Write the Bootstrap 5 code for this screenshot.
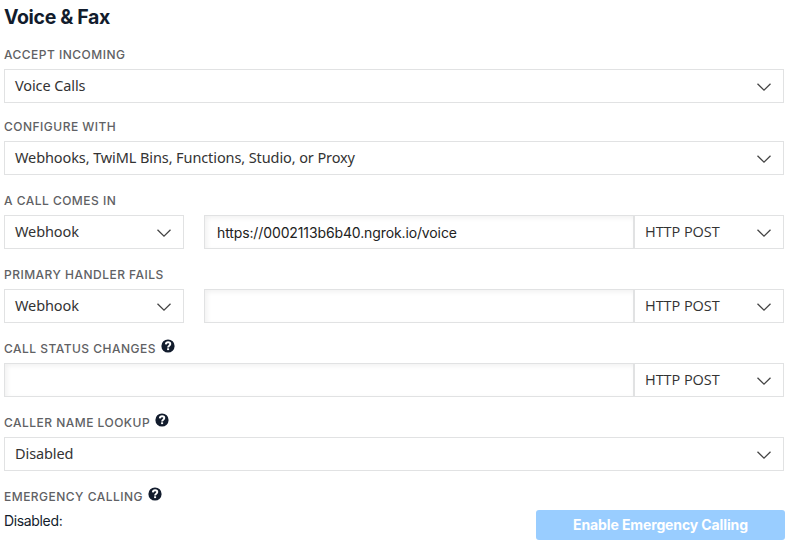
<!DOCTYPE html>
<html lang="en">
<head>
<meta charset="utf-8">
<meta name="viewport" content="width=device-width, initial-scale=1">
<title>Voice &amp; Fax</title>
<link href="https://cdn.jsdelivr.net/npm/bootstrap@5.3.0/dist/css/bootstrap.min.css" rel="stylesheet">
<style>
body{font-family:Inter,"Liberation Sans",sans-serif;font-size:14px;line-height:20px;color:#121c2d;background:#fff;overflow:hidden}
.voice-form{width:784px;padding-left:4px}
.title{font-size:19.5px;line-height:24px;font-weight:700;letter-spacing:-.36px;padding-top:5px;margin-bottom:12px}
.field{margin-bottom:12px}
.field-first{margin-bottom:10px}
.caption{height:28px;font-size:12px;font-weight:500;letter-spacing:.48px;color:#606164;white-space:nowrap}
.help{width:14px;height:14px;margin:-6px 0 0 5px}
.picker{height:34px;border:1px solid #e1e2e3;padding:0 12px 2px 10px;font-family:"Noto Sans",sans-serif;font-size:14.5px;letter-spacing:-.1px;color:#333;background:#fff;white-space:nowrap;text-align:left;border-radius:0}
.picker svg{width:14px;height:8px;margin-top:4px}
.type{width:180px;margin-right:20px}
.method{width:150px;font-family:"Open Sans",sans-serif;letter-spacing:-.05px}
.method span{padding-top:1px}
.entry.form-control{height:34px;width:auto;min-width:0;border:1px solid #e1e2e3;border-radius:0;padding:0 12px;font-size:14px;letter-spacing:-.12px;color:#222;box-shadow:inset 2px 2px 5px rgba(0,0,0,.06)}
.status{height:30px;margin-top:-1px;letter-spacing:-.35px}
.status span{padding-top:1px}
.enable.btn{width:249px;height:30px;margin-right:-1px;padding:0 0 2px;border:0;border-radius:3px;background:#99cdff;color:#fff;font-size:14px;font-weight:700;letter-spacing:-.12px;opacity:1}
</style>
</head>
<body>
<svg class="d-none">
<symbol id="chevron" viewBox="0 0 14 8"><path d="M.5.8 7 7.1 13.5.8" fill="none" stroke="#444" stroke-width="1.3"/></symbol>
<symbol id="question" viewBox="0 0 14 14"><circle cx="7" cy="7" r="6.6" fill="#121c2d"/><path d="M4.8 5.3C5 3.9 5.9 3.3 7.1 3.3c1.3 0 2.2.7 2.2 1.8C9.3 6.7 7.1 6.7 7.1 8.4" fill="none" stroke="#fff" stroke-width="1.9"/><path d="M6.1 9.3h2v1.8h-2z" fill="#fff"/></symbol>
</svg>
<main class="voice-form">
<h1 class="title">Voice &amp; Fax</h1>
<div class="field field-first">
<div class="caption d-flex align-items-center">ACCEPT INCOMING</div>
<div class="picker d-flex align-items-center justify-content-between"><span>Voice Calls</span><svg><use href="#chevron"/></svg></div>
</div>
<div class="field">
<div class="caption d-flex align-items-center">CONFIGURE WITH</div>
<div class="picker d-flex align-items-center justify-content-between"><span>Webhooks, TwiML Bins, Functions, Studio, or Proxy</span><svg><use href="#chevron"/></svg></div>
</div>
<div class="field">
<div class="caption d-flex align-items-center">A CALL COMES IN</div>
<div class="d-flex">
<div class="picker type d-flex align-items-center justify-content-between"><span>Webhook</span><svg><use href="#chevron"/></svg></div>
<input class="entry form-control flex-fill" value="https://0002113b6b40.ngrok.io/voice">
<div class="picker method d-flex align-items-center justify-content-between"><span>HTTP POST</span><svg><use href="#chevron"/></svg></div>
</div>
</div>
<div class="field">
<div class="caption d-flex align-items-center">PRIMARY HANDLER FAILS</div>
<div class="d-flex">
<div class="picker type d-flex align-items-center justify-content-between"><span>Webhook</span><svg><use href="#chevron"/></svg></div>
<input class="entry form-control flex-fill">
<div class="picker method d-flex align-items-center justify-content-between"><span>HTTP POST</span><svg><use href="#chevron"/></svg></div>
</div>
</div>
<div class="field">
<div class="caption d-flex align-items-center">CALL STATUS CHANGES<svg class="help"><use href="#question"/></svg></div>
<div class="d-flex">
<input class="entry form-control flex-fill">
<div class="picker method d-flex align-items-center justify-content-between"><span>HTTP POST</span><svg><use href="#chevron"/></svg></div>
</div>
</div>
<div class="field">
<div class="caption d-flex align-items-center">CALLER NAME LOOKUP<svg class="help"><use href="#question"/></svg></div>
<div class="picker d-flex align-items-center justify-content-between"><span>Disabled</span><svg><use href="#chevron"/></svg></div>
</div>
<div class="caption d-flex align-items-center">EMERGENCY CALLING<svg class="help"><use href="#question"/></svg></div>
<div class="status d-flex justify-content-between"><span>Disabled:</span><button class="enable btn" type="button">Enable Emergency Calling</button></div>
</main>
<script src="https://cdn.jsdelivr.net/npm/bootstrap@5.3.0/dist/js/bootstrap.bundle.min.js"></script>
</body>
</html>
